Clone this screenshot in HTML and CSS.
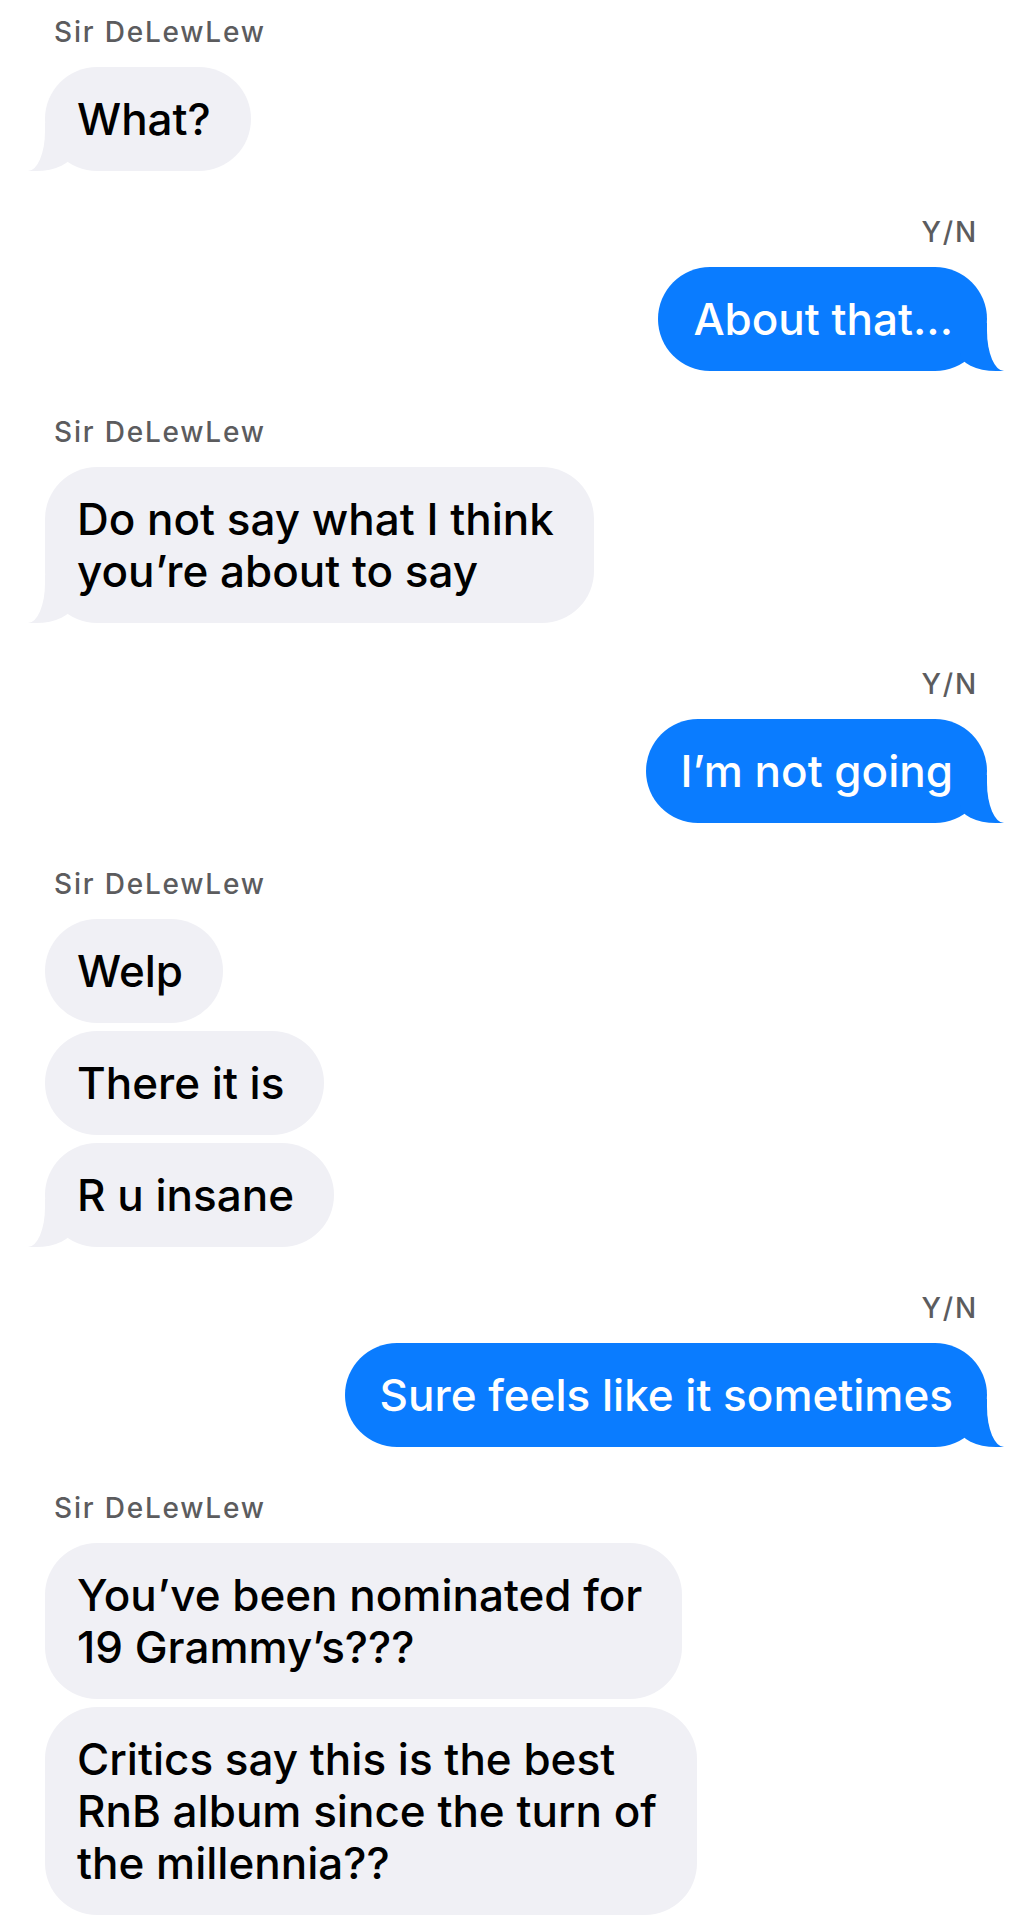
FILE: index.html
```html
<!DOCTYPE html>
<html lang="en">
<head>
  <meta charset="UTF-8" />
  <meta name="viewport" content="width=device-width, initial-scale=1.0"/>
  <title>Sir DeLewLew</title>
  <link rel="stylesheet" href="styles.css">
</head>
<body>

  <div class="chat">
    <div class="group them">
      <div class="sender">Sir DeLewLew</div>
      <p class="bubble tail">What?</p>
    </div>

    <div class="group me">
      <div class="sender">Y/N</div>
      <p class="bubble tail">About that...</p>
    </div>

    <div class="group them">
      <div class="sender">Sir DeLewLew</div>
      <p class="bubble tail">Do not say what I think<br>you’re about to say</p>
    </div>

    <div class="group me">
      <div class="sender">Y/N</div>
      <p class="bubble tail">I’m not going</p>
    </div>

    <div class="group them">
      <div class="sender">Sir DeLewLew</div>
      <p class="bubble">Welp</p>
      <p class="bubble">There it is</p>
      <p class="bubble tail">R u insane</p>
    </div>

    <div class="group me">
      <div class="sender">Y/N</div>
      <p class="bubble tail">Sure feels like it sometimes</p>
    </div>

    <div class="group them">
      <div class="sender">Sir DeLewLew</div>
      <p class="bubble">You’ve been nominated for<br>19 Grammy’s???</p>
      <p class="bubble">Critics say this is the best<br>RnB album since the turn of<br>the millennia??</p>
    </div>
  </div>

</body>
</html>
```

FILE: styles.css
```css
body {
  margin: 0;
  background-color: #ffffff;
  font-family: 'Inter', 'Noto Sans', sans-serif;
  color: #000000;
}

.chat {
  display: flex;
  flex-direction: column;
  gap: 44px;
  padding: 15px 45px 0;
}

.group {
  display: flex;
  flex-direction: column;
  align-items: flex-start;
  gap: 8px;
}

.group.me {
  align-items: flex-end;
}

.sender {
  font-size: 28px;
  font-weight: 500;
  line-height: 34px;
  color: #5c5c5e;
  letter-spacing: 1.8px;
  padding: 0 9px;
  margin-bottom: 10px;
}

.bubble {
  position: relative;
  margin: 0;
  max-width: 640px;
  font-size: 44px;
  font-weight: 500;
  line-height: 52px;
  border-radius: 52px;
  white-space: nowrap;
}

.them .bubble {
  padding: 26px 40px 26px 32px;
  background-color: #f0f0f5;
  color: #000000;
}

.me .bubble {
  padding: 26px 34px 26px 35px;
  background-color: #0a7cff;
  color: #ffffff;
}

/* tail: a coloured block, then a white block to carve the curve */
.tail::before,
.tail::after {
  content: "";
  position: absolute;
  bottom: 0;
  height: 48px;
}

.them .tail::before {
  left: -17px;
  width: 44px;
  background-color: #f0f0f5;
  border-bottom-right-radius: 36px 18px;
}

.them .tail::after {
  left: -60px;
  width: 60px;
  background-color: #ffffff;
  border-bottom-right-radius: 17px 40px;
}

.me .tail::before {
  right: -17px;
  width: 44px;
  background-color: #0a7cff;
  border-bottom-left-radius: 36px 18px;
}

.me .tail::after {
  right: -60px;
  width: 60px;
  background-color: #ffffff;
  border-bottom-left-radius: 17px 40px;
}
```
